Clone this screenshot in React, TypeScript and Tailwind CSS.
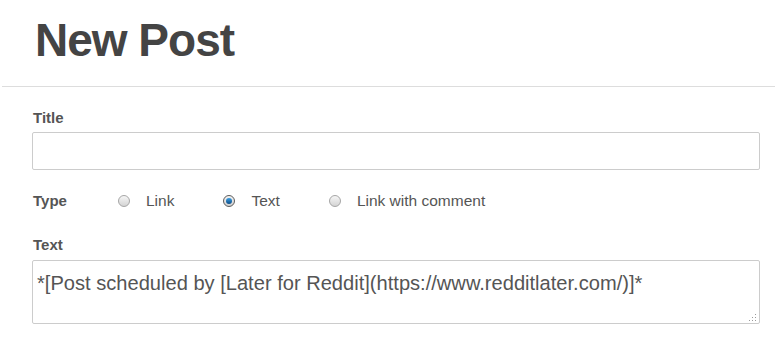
const font = { fontFamily: '"Liberation Sans", Arial, sans-serif' };

function Radio({ checked, label }: { checked?: boolean; label: string }) {
    return (
        <label className="flex items-center">
            <span
                className={`flex h-[12px] w-[12px] items-center justify-center rounded-full border ${checked ? "border-[#5b5b5b] bg-gradient-to-b from-[#f4f4f4] to-[#cfcfcf]" : "border-[#a6a6a6] bg-gradient-to-b from-[#f6f6f6] to-[#d4d4d4]"}`}
            >
                {checked && <span className="h-[6px] w-[6px] rounded-full bg-gradient-to-b from-[#3aa0e6] to-[#0b4c86]"></span>}
            </span>
            <span className="ml-[16px] text-[15.5px] leading-[20px] text-[#555]">{label}</span>
        </label>
    );
}

export default function App() {
    return (
        <div className="h-[340px] w-[775px] bg-white" style={font}>
            <header className="ml-[2px] border-b border-[#dddddd] pl-[33px] pt-[15px] pb-[21px]">
                <h1 className="text-[46px] font-bold leading-[50px] tracking-[-1px] text-[#444]">New Post</h1>
            </header>

            <form className="pl-[32px] pr-[15px] pt-[21px]">
                <div className="text-[15px] font-bold leading-[20px] text-[#555] pl-[1px]">Title</div>
                <input
                    type="text"
                    className="mt-[4px] block h-[38px] w-full rounded-[2px] border border-[#cccccc] bg-white outline-none"
                />

                <div className="mt-[21px] flex h-[20px] items-center">
                    <div className="w-[86px] pl-[1px] text-[15px] font-bold leading-[20px] text-[#555]">Type</div>
                    <div className="flex items-center gap-[49px]">
                        <Radio label="Link" />
                        <Radio checked label="Text" />
                        <Radio label="Link with comment" />
                    </div>
                </div>

                <div className="mt-[24px] text-[15px] font-bold leading-[20px] text-[#555] pl-[1px]">Text</div>
                <div className="relative mt-[5px]">
                    <textarea
                        readOnly
                        className="block h-[64px] w-full resize-none rounded-[2px] border border-[#cccccc] bg-white pl-[4px] pt-[10px] text-[20.1px] leading-[24px] text-[#555] outline-none"
                        style={font}
                        value="*[Post scheduled by [Later for Reddit](https://www.redditlater.com/)]*"
                    />
                    <svg className="absolute bottom-[2px] right-[3px]" width="8" height="8" viewBox="0 0 8 8">
                        <rect x="6" y="0" width="1" height="1" fill="#9a9a9a" />
                        <rect x="3" y="3" width="1" height="1" fill="#9a9a9a" />
                        <rect x="6" y="3" width="1" height="1" fill="#9a9a9a" />
                        <rect x="0" y="6" width="1" height="1" fill="#9a9a9a" />
                        <rect x="3" y="6" width="1" height="1" fill="#9a9a9a" />
                        <rect x="6" y="6" width="1" height="1" fill="#9a9a9a" />
                    </svg>
                </div>
            </form>
        </div>
    );
}
